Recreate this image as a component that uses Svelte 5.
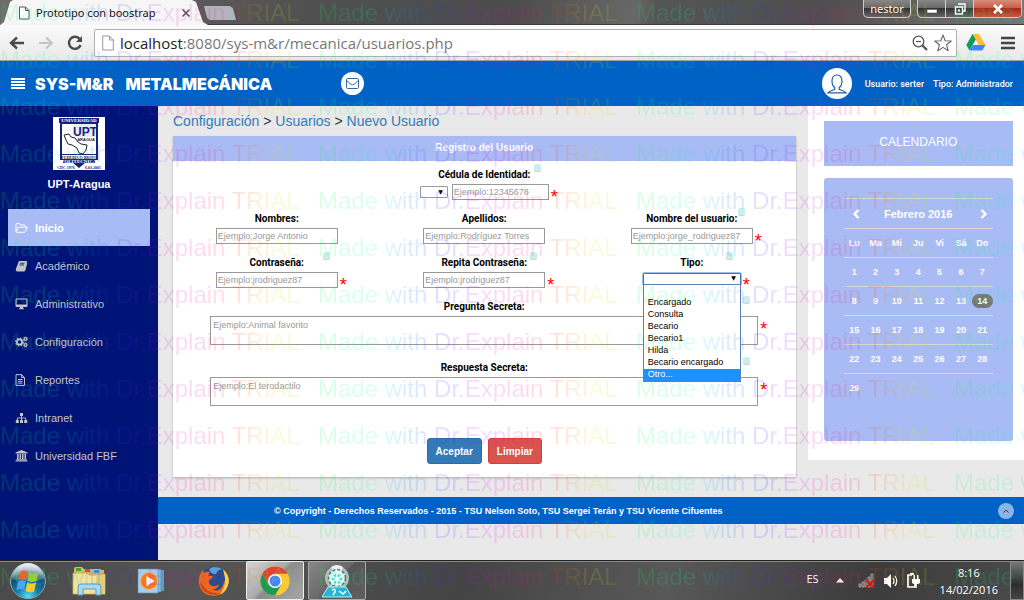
<script>
  const menu = [
    { label: 'Inicio', icon: 'folder' },
    { label: 'Académico', icon: 'book' },
    { label: 'Administrativo', icon: 'desktop' },
    { label: 'Configuración', icon: 'cogs' },
    { label: 'Reportes', icon: 'file' },
    { label: 'Intranet', icon: 'sitemap' },
    { label: 'Universidad FBF', icon: 'bank' }
  ];
  const rows = [
    { id: 'nombres', label: 'Nombres:', hint: 'Ejemplo:Jorge Antonio' },
    { id: 'apellidos', label: 'Apellidos:', hint: 'Ejemplo:Rodríguez Torres' },
    { id: 'usuario', label: 'Nombre del usuario:', hint: 'Ejemplo:jorge_rodriguez87', required: true, tip: true },
    { id: 'clave', label: 'Contraseña:', hint: 'Ejemplo:jrodriguez87', required: true, tip: true },
    { id: 'clave2', label: 'Repita Contraseña:', hint: 'Ejemplo:jrodriguez87', required: true, tip: true }
  ];
  const secrets = [
    { id: 'pregunta', label: 'Pregunta Secreta:', hint: 'Ejemplo:Animal favorito' },
    { id: 'respuesta', label: 'Respuesta Secreta:', hint: 'Ejemplo:El terodactilo' }
  ];
  const tipos = ['', 'Encargado', 'Consulta', 'Becario', 'Becario1', 'Hilda', 'Becario encargado', 'Otro...'];
  const days = ['Lu', 'Ma', 'Mi', 'Ju', 'Vi', 'Sá', 'Do'];
  const weeks = [0, 1, 2, 3, 4].map((w) => days.map((_, d) => w * 7 + d + 1));
  const marks = Array.from({ length: 13 });
</script>

<div class="screen">
  <div class="tabs">
    <div class="tab">
      <svg width="12" height="14" viewBox="0 0 12 14"><path d="M1.5 1H7.5L11 4.5V13H1.5ZM7.5 1V4.5H11" fill="#fff" stroke="#555" /></svg>
      <span>Prototipo con boostrap</span>
      <button aria-label="Cerrar pestaña"><svg width="10" height="10" viewBox="0 0 10 10"><path d="M1.5 1.5 8.5 8.5M8.5 1.5 1.5 8.5" stroke="#555" stroke-width="1.5" /></svg></button>
    </div>
    <button class="newtab" aria-label="Nueva pestaña"></button>
    <button class="person">nestor</button>
    <div class="winbtns">
      <button aria-label="Minimizar"><svg width="12" height="12" viewBox="0 0 12 12"><rect x="1" y="6.5" width="10" height="3.5" fill="#fff" stroke="#555" stroke-width=".6" /></svg></button>
      <button aria-label="Restaurar"><svg width="12" height="12" viewBox="0 0 12 12"><path d="M4 1H11V8H9M1.5 4H8.5V11H1.5Z" fill="none" stroke="#fff" stroke-width="1.5" /><rect x="4" y="6.5" width="2" height="2" fill="#fff" /></svg></button>
      <button class="close" aria-label="Cerrar"><svg width="12" height="10" viewBox="0 0 12 10"><path d="M2 1 10 9M10 1 2 9" stroke="#fff" stroke-width="2.5" /></svg></button>
    </div>
  </div>

  <div class="toolbar">
    <button aria-label="Atrás"><svg width="16" height="14" viewBox="0 0 16 14"><path d="M8 1.5 2 7 8 12.5M2.5 7H15" fill="none" stroke="#4a4a4a" stroke-width="2.4" /></svg></button>
    <button aria-label="Adelante"><svg width="16" height="14" viewBox="0 0 16 14"><path d="M8 1.5 14 7 8 12.5M13.5 7H1" fill="none" stroke="#c4c4c4" stroke-width="2.2" /></svg></button>
    <button aria-label="Recargar"><svg width="16" height="16" viewBox="0 0 16 16"><path d="M12.8 4.2A6 6 0 1 0 13.6 10" fill="none" stroke="#4a4a4a" stroke-width="2.4" /><path d="M15 1V7H9Z" fill="#4a4a4a" /></svg></button>
    <div class="address">
      <svg width="12" height="16" viewBox="0 0 12 16"><path d="M.7 1H7.5L11.3 5V15H.7ZM7.5 1V5H11.3" fill="#fff" stroke="#999" /></svg>
      <span class="url"><b>localhost</b>:8080/sys-m&amp;r/mecanica/usuarios.php</span>
      <svg width="16" height="16" viewBox="0 0 16 16"><circle cx="6.5" cy="6.5" r="5.3" fill="none" stroke="#555" stroke-width="1.3" /><path d="M4 6.5H9" stroke="#555" stroke-width="1.2" /><path d="M10.5 10.5 15 15" stroke="#555" stroke-width="2.4" /></svg>
      <svg width="18" height="18" viewBox="0 0 18 18"><path d="M9 1 11.2 6.7 17.3 7 12.6 10.8 14.2 16.8 9 13.4 3.8 16.8 5.4 10.8.7 7 6.8 6.7Z" fill="#fff" stroke="#666" stroke-width="1.1" stroke-linejoin="round" /></svg>
    </div>
    <svg class="drive" width="20" height="17" viewBox="0 0 20 17"><path d="M6.5 0H13L19.5 11H13Z" fill="#fbc02d" /><path d="M6.5 0 9.8 5.6 3.5 16.5.3 11Z" fill="#0f9d58" /><path d="M6.7 11H19.5L16.3 16.5H3.5Z" fill="#4285f4" /></svg>
    <button aria-label="Menú de Chrome"><svg width="14" height="14" viewBox="0 0 14 14"><path d="M0 2H14M0 7H14M0 12H14" stroke="#444" stroke-width="2.6" /></svg></button>
  </div>

  <header>
    <button aria-label="Menú"><svg width="14" height="12" viewBox="0 0 14 12"><path d="M0 1H14M0 4H14M0 7H14M0 10H14" stroke="#fff" stroke-width="2" /></svg></button>
    <h1><span>SYS-M&amp;R</span><span>METALMECÁNICA</span></h1>
    <a class="mail" href="#mensajes" aria-label="Mensajes"><svg width="13" height="11" viewBox="0 0 13 11"><rect x=".5" y=".5" width="12" height="10" rx="1.2" fill="none" stroke="#2f6aa8" /><path d="M.8 2.5Q4.5 6.8 6.5 6.8T12.2 2.5" fill="none" stroke="#2f6aa8" /></svg></a>
    <div class="who">
      <span class="avatar"><svg width="20" height="20" viewBox="0 0 20 20"><path d="M10 1C6.8 1 5 3.5 5 7C5 10 6.3 12.6 7.8 13.6V15.2C6.5 16.4 2.8 16.2 1 18.8H19C17.2 16.2 13.5 16.4 12.2 15.2V13.6C13.7 12.6 15 10 15 7C15 3.5 13.2 1 10 1Z" fill="none" stroke="#1f5fa5" stroke-width="1.2" /></svg></span>
      <span>Usuario: serter</span><span>Tipo: Administrador</span>
    </div>
  </header>

  <div class="body">
    <nav>
      <svg class="logo" viewBox="0 0 52 53">
        <rect width="52" height="53" fill="#fff" />
        <path d="M6 1H46V6H45V43H42V46H32L26 51 20 46H10V43H7V6H6Z" fill="#15237c" />
        <path d="M9 7H43V37H9Z" fill="#fff" />
        <path d="M9 38H43V42H9Z" fill="#fff" />
        <path d="M22 7H43V20H22Z" fill="#e8ecfa" />
        <text x="26" y="5" font-size="5" text-anchor="middle" fill="#fff" class="serif">UNIVERSIDAD</text>
        <text x="32" y="19" font-size="12" text-anchor="middle" fill="#15237c" class="heavy">UPT</text>
        <text x="33" y="24" font-size="4" text-anchor="middle" fill="#222" class="heavy">ARAGUA</text>
        <path d="M11 18 16 17 18 20 22 21 25 25 28 27 34 28 33 33 30 37 26 36 24 31 19 28 15 27 13 23Z" fill="#fff" stroke="#222" />
        <text x="26" y="42" font-size="4" text-anchor="middle" fill="#222" class="serif">FEDERICO BRITO</text>
        <text x="26" y="46" font-size="5" text-anchor="middle" fill="#fff" class="serif">POLITECNICA</text>
        <text x="13" y="52" font-size="4" text-anchor="middle" fill="#15237c" class="serif">CDC 1976</text>
        <text x="40" y="52" font-size="4" text-anchor="middle" fill="#15237c" class="serif">6.03.2001</text>
      </svg>
      <strong>UPT-Aragua</strong>
      <ul>
        {#each menu as item, i}
          <li>
            <a href="#{item.icon}" class:active={i === 0}>
              <svg width="13" height="12" viewBox="0 0 13 12">
                {#if item.icon === 'folder'}
                  <path d="M1 9.5V2.5Q1 1.5 2 1.5H4.5L5.5 3H9.5Q10.3 3 10.3 4V5M1 9.8 3.3 5.3H12.3L10.3 9.8Q10 10.3 9.5 10.3H1.5Q.9 10.3 1 9.5Z" fill="none" stroke="currentColor" />
                {:else if item.icon === 'book'}
                  <path d="M4 1H12L10 9.5Q9.7 10.3 9 10.3H2.5Q1.8 10.3 2 9.2H9L10.8 2.5 12.3 2.8 10.5 10Q10 11.4 9 11.4H2Q.3 11 .8 9Z" fill="currentColor" /><path d="M5 3.3H9.5M4.5 5H9" stroke="#001377" stroke-width=".8" />
                {:else if item.icon === 'desktop'}
                  <path fill-rule="evenodd" d="M1.5.5H11.5Q12.5.5 12.5 1.5V8Q12.5 9 11.5 9H8L8.3 10.5H9V11.3H4V10.5H4.7L5 9H1.5Q.5 9 .5 8V1.5Q.5.5 1.5.5ZM1.6 1.6V6.6H11.4V1.6Z" fill="currentColor" />
                {:else if item.icon === 'cogs'}
                  <circle cx="4.5" cy="6" r="2.6" fill="none" stroke="currentColor" stroke-width="1.8" /><circle cx="4.5" cy="6" r="3.9" fill="none" stroke="currentColor" stroke-width="1.2" stroke-dasharray="1.5 1.56" />
                  <circle cx="10.5" cy="3" r="1.4" fill="none" stroke="currentColor" stroke-width="1.2" /><circle cx="10.5" cy="3" r="2.2" fill="none" stroke="currentColor" stroke-width=".6" stroke-dasharray="1 .8" />
                  <circle cx="10.5" cy="9" r="1.4" fill="none" stroke="currentColor" stroke-width="1.2" /><circle cx="10.5" cy="9" r="2.2" fill="none" stroke="currentColor" stroke-width=".6" stroke-dasharray="1 .8" />
                {:else if item.icon === 'file'}
                  <path d="M1 .6H6.5L9.5 3.6V11.4H1ZM6.5.6V3.6H9.5M3 5.5H7.5M3 7.3H7.5M3 9.1H7.5" fill="none" stroke="currentColor" />
                {:else if item.icon === 'sitemap'}
                  <path d="M5 1H8V4H5ZM.8 8H3.8V11H.8ZM5 8H8V11H5ZM9.2 8H12.2V11H9.2Z" fill="currentColor" /><path d="M6.5 4V8M2.3 8V6H10.7V8" fill="none" stroke="currentColor" stroke-width=".9" />
                {:else}
                  <path d="M6.5 0 12.5 2.6V3.5H.5V2.6ZM2 4H3.6V9H2ZM4.6 4H6.1V9H4.6ZM7 4H8.5V9H7ZM9.5 4H11V9H9.5ZM1.2 9.2H11.8V10.2H1.2ZM.5 10.6H12.5V11.6H.5Z" fill="currentColor" />
                {/if}
              </svg>
              {item.label}
            </a>
          </li>
        {/each}
      </ul>
    </nav>

    <div class="content">
      <div class="columns">
        <main>
          <div class="crumbs"><a href="#configuracion">Configuración</a> &gt; <a href="#usuarios">Usuarios</a> &gt; <a href="#nuevo">Nuevo Usuario</a></div>
          <form>
            <h2>Registro del Usuario</h2>
            <div class="field">
              <label for="cedula">Cédula de Identidad:</label>
              <div class="line">
                <div class="control pair">
                  <span class="pick small"><select aria-label="Nacionalidad"><option></option></select></span>
                  <input id="cedula" placeholder="Ejemplo:12345678" />
                  <i class="tip"></i>
                </div>
                <span class="star">*</span>
              </div>
            </div>
            <div class="trio">
              {#each rows as f}
                <div class="field">
                  <label for={f.id}>{f.label}</label>
                  <div class="line">
                    <div class="control">
                      <input id={f.id} placeholder={f.hint} />
                      {#if f.tip}<i class="tip"></i>{/if}
                    </div>
                    {#if f.required}<span class="star">*</span>{/if}
                  </div>
                </div>
              {/each}
              <div class="field">
                <label for="tipo">Tipo:</label>
                <div class="line">
                  <div class="control">
                    <span class="pick open"><select id="tipo">{#each tipos as t}<option>{t}</option>{/each}</select></span>
                    <i class="tip"></i>
                    <div class="list">
                      {#each tipos as t, i}<div class:on={i === 7}>{t}</div>{/each}
                    </div>
                  </div>
                  <span class="star">*</span>
                </div>
              </div>
            </div>
            {#each secrets as s}
              <div class="field wide">
                <label for={s.id}>{s.label}</label>
                <div class="line">
                  <div class="control">
                    <textarea id={s.id} placeholder={s.hint}></textarea>
                    <i class="tip"></i>
                  </div>
                  <span class="star">*</span>
                </div>
              </div>
            {/each}
            <div class="actions">
              <button type="button" class="ok">Aceptar</button>
              <button type="reset" class="clear">Limpiar</button>
            </div>
          </form>
        </main>

        <aside>
          <h3>CALENDARIO</h3>
          <div class="calendar">
            <table>
              <thead>
                <tr>
                  <th><button aria-label="Mes anterior"><svg width="8" height="10" viewBox="0 0 8 10"><path d="M6.5 1 2.5 5 6.5 9" fill="none" stroke="#fff" stroke-width="2.4" /></svg></button></th>
                  <th colspan="5" class="month">Febrero 2016</th>
                  <th><button aria-label="Mes siguiente"><svg width="8" height="10" viewBox="0 0 8 10"><path d="M1.5 1 5.5 5 1.5 9" fill="none" stroke="#fff" stroke-width="2.4" /></svg></button></th>
                </tr>
                <tr>{#each days as d}<th>{d}</th>{/each}</tr>
              </thead>
              <tbody>
                {#each weeks as w}
                  <tr>{#each w as d}<td>{#if d <= 29}<span class:today={d === 14}>{d}</span>{/if}</td>{/each}</tr>
                {/each}
              </tbody>
            </table>
          </div>
        </aside>
      </div>
      <footer>
        <p>© Copyright - Derechos Reservados - 2015 - TSU Nelson Soto, TSU Sergei Terán y TSU Vicente Cifuentes</p>
        <a href="#arriba" aria-label="Subir"><svg width="6" height="4" viewBox="0 0 6 4"><path d="M.5 3.5 3 1 5.5 3.5" fill="none" stroke="#246" /></svg></a>
      </footer>
    </div>
  </div>

  <div class="taskbar">
    <button class="start" aria-label="Inicio">
      <svg width="38" height="38" viewBox="0 0 38 38">
        <defs>
          <radialGradient id="orb" cx=".5" cy=".95" r=".9"><stop offset="0" stop-color="#4fe0f5" /><stop offset=".35" stop-color="#1580b0" /><stop offset=".75" stop-color="#164668" /><stop offset="1" stop-color="#a9c2cf" /></radialGradient>
          <linearGradient id="shine" x2="0" y2="1"><stop offset="0" stop-color="#fff" stop-opacity=".75" /><stop offset="1" stop-color="#fff" stop-opacity=".15" /></linearGradient>
        </defs>
        <circle cx="19" cy="19" r="17.5" fill="url(#orb)" stroke="#8ba6b2" />
        <path d="M3 17A16 16 0 0 1 35 17Q19 22 3 17Z" fill="url(#shine)" />
        <path d="M11.5 9.5Q15 7.5 18.700 9.500L17 18Q14 16 9.500 18Z" fill="#f0612a" />
        <path d="M20 10Q24 12.5 29.500 10.500L27.500 19Q22.500 21 18.500 18.700Z" fill="#9dc93c" />
        <path d="M9.200 19.500Q13 17.500 16.700 19.500L15.200 28Q12 26 7.500 28Z" fill="#4aa8e8" />
        <path d="M18.200 20.200Q22 22.500 27 20.500L25.200 29.500Q21 31.500 16.500 29Z" fill="#fdc92e" />
      </svg>
    </button>
    <button aria-label="Explorador">
      <svg width="34" height="32" viewBox="0 0 34 32">
        <path d="M2 4Q2 2 4 2H10L12 4H18L20 4H28L30 5H32V28H2Z" fill="#d6b963" /><path d="M4 3H9V6H4Z" fill="#39a935" /><path d="M13 4H18V7H13Z" fill="#d9482b" /><path d="M22 5H27V8H22Z" fill="#3a8fd9" />
        <path d="M1 8H15L17 10H25L33 9V29H1Z" fill="#f5e29b" stroke="#cfae54" stroke-width=".8" /><path d="M24 10H33V29H24Z" fill="#e8cd78" />
        <path d="M6 30V22Q6 19 9 19H26Q29 19 29 22V30H24V24H11V30Z" fill="#a9d8ef" stroke="#5c9cc0" />
      </svg>
    </button>
    <button aria-label="Reproductor">
      <svg width="30" height="28" viewBox="0 0 30 28">
        <path d="M8 3H28V24H8Z" fill="#5c9fc9" /><path d="M5 2.5H25V25H5Z" fill="#82bde0" stroke="#4d87ae" stroke-width=".6" /><path d="M2 2H22V26H2Z" fill="#a5cfe6" stroke="#5a8eb0" stroke-width=".6" />
        <circle cx="13" cy="14" r="8.500" fill="#f47b20" stroke="#f9b27a" /><path d="M10.5 9 18.5 14 10.5 19Z" fill="#fff" />
      </svg>
    </button>
    <button aria-label="Firefox">
      <svg width="32" height="32" viewBox="0 0 32 32">
        <circle cx="17" cy="14.5" r="13" fill="#224f93" /><path d="M12 4Q18 0 25 4Q20 5 19 9Q14 10 12 4Z" fill="#5d9fd6" />
        <path d="M29 7Q33 13 31 20Q28 31 16 31Q4 30 2 19Q1 10 6 5L7 8Q10 6 13 7Q11 9 12 11H16Q15 14 12 15Q11 19 15 21Q19 22 22 19Q21 25 15 24Q21 28 25 22Q29 15 29 7Z" fill="#ec6a1e" />
        <path d="M26 4Q34 12 31 20Q29 27 23 29.5Q29 21 28 13Q27 8 26 4Z" fill="#fbd04a" /><path d="M3 17Q3 24 10 28Q17 32 24 28Q12 29 7 22Z" fill="#cf451a" />
      </svg>
    </button>
    <button class="win bright" aria-label="Chrome">
      <svg width="32" height="32" viewBox="0 0 32 32">
        <circle cx="16" cy="16" r="14.5" fill="#fcc934" />
        <path d="M3.4 8.7A14.5 14.5 0 0 1 28.6 8.7H16L9.7 19.6Z" fill="#db4437" /><path d="M3.4 8.7A14.5 14.5 0 0 0 16 30.5L22.3 19.6H9.7Z" fill="#1a9c55" />
        <circle cx="16" cy="16" r="7" fill="#fff" /><circle cx="16" cy="16" r="5.5" fill="#4285f4" />
      </svg>
    </button>
    <button class="win" aria-label="Dr.Explain">
      <svg width="32" height="34" viewBox="0 0 32 34">
        <circle cx="16" cy="14" r="12" fill="#b4bebe" /><path d="M10 3Q16-1 22 3L20 8H12Z" fill="#eef3f2" />
        <circle cx="16" cy="14" r="8.5" fill="#e6f4f4" stroke="#4c7575" stroke-width="1.5" stroke-dasharray="3 2" /><circle cx="16" cy="15" r="5" fill="#47dbe0" />
        <path d="M16 9V21M11 12 21 18M21 12 11 18" stroke="#f2ffff" stroke-width="1.500" />
        <path d="M7 23H25L31 33H1Z" fill="#27b4d8" stroke="#b6f0f6" /><path d="M11 26Q15 24 14 28L12 31M18 27 22 30 25 27" stroke="#fff" stroke-width="1.5" fill="none" />
      </svg>
    </button>
    <div class="tray">
      <span class="lang">ES</span>
      <svg width="8" height="5" viewBox="0 0 8 5"><path d="M4 0 8 4.5H0Z" fill="#fff" /></svg>
      <svg width="18" height="16" viewBox="0 0 18 16"><path d="M1 11H3V14H1ZM4 9H6V14H4ZM7 7H9V14H7ZM10 4H12V14H10ZM13 1H15V14H13Z" fill="#555" stroke="#bbb" stroke-width=".7" /><path d="M8 7 16 15M16 7 8 15" stroke="#e01010" stroke-width="2" /></svg>
      <svg width="16" height="16" viewBox="0 0 16 16"><path d="M1 5H4L8 1V15L4 11H1Z" fill="#fff" /><path d="M10 5Q12 8 10 11M12 3Q15.5 8 12 13" fill="none" stroke="#fff" stroke-width="1.2" /></svg>
      <svg width="16" height="17" viewBox="0 0 16 17"><path d="M6 3H2V15H9V12" fill="none" stroke="#fff" stroke-width="1.7" /><path d="M4 1H8V3H4ZM6 7H14V10Q14 12 10.8 12V16H9.3V12Q6 12 6 10ZM7.5 3H9V7H7.5ZM11 3H12.5V7H11Z" fill="#fff" /></svg>
      <div class="clock"><span>8:16</span><span>14/02/2016</span></div>
      <button class="peek" aria-label="Mostrar escritorio"></button>
    </div>
  </div>

  <div class="watermark" aria-hidden="true">
    {#each marks as _}
      <div>{#each [0, 1, 2, 3] as _}<span>Made with Dr.Explain TRIAL</span>{/each}</div>
    {/each}
  </div>
</div>

<style>
  :global(body) { margin: 0; }
  * { box-sizing: border-box; }
  .screen {
    position: relative;
    min-height: 100vh;
    display: flex;
    flex-direction: column;
    overflow: hidden;
    font-family: "Liberation Sans", Arial, sans-serif;
    font-size: 11px;
    background: #e9e9e9;
  }
  svg { display: block; flex: none; }
  button { font: inherit; border: 0; padding: 0; background: none; display: flex; align-items: center; justify-content: center; }
  a { text-decoration: none; }
  h1, h2, h3, p, ul { margin: 0; padding: 0; }

  .tabs { height: 25px; display: flex; background: linear-gradient(100deg, #6d6d6d, #505050 30%, #4c4c4c 50%, #686868 62%, #555 64%, #4e4e4e 80%, #777); border-bottom: 1px solid #3c3c3c; }
  .tab { width: 208px; height: 25px; display: flex; align-items: center; gap: 6px; padding: 0 17px 0 18px; background: #f6f6f6; clip-path: polygon(0 100%, 4px 88%, 10px 8%, 13px 0, 192px 0, 196px 8%, 203px 88%, 208px 100%); font: 11px "Noto Sans", sans-serif; color: #111; }
  .tab button { margin-left: auto; }
  .newtab { width: 32px; height: 14px; margin-top: 6px; margin-left: -4px; background: #b0b5bd; clip-path: polygon(0 0, 80% 0, 90% 15%, 100% 100%, 18% 100%, 10% 85%); }
  .person, .winbtns { height: 18px; border: 1px solid #ccc; border-top: 0; border-radius: 0 0 5px 5px; background: linear-gradient(#888, #666 50%, #333 50%, #666); color: #fff; }
  .person { margin-left: auto; width: 48px; font: 11px "Noto Sans", sans-serif; }
  .winbtns { display: flex; margin: 0 2px 0 6px; overflow: hidden; }
  .winbtns button { width: 28px; border-right: 1px solid #ccc; }
  .winbtns .close { width: 47px; border: 0; background: linear-gradient(#d98d7c, #c85a45 50%, #a82a18 50%, #d0533c); }

  .toolbar { height: 36px; display: flex; align-items: center; gap: 13px; padding: 0 9px 0 9px; background: linear-gradient(#fafafa, #e9e9e9); border-bottom: 1px solid #a0a0a0; }
  .address { flex: 1; height: 28px; margin-left: -2px; display: flex; align-items: center; gap: 6px; padding: 0 4px 0 7px; background: #fff; border: 1px solid #b0b0b0; border-radius: 2px; }
  .url { flex: 1; font: 15px "Open Sans", sans-serif; color: #777; }
  .url b { font-weight: 400; color: #222; }
  .drive { margin-left: -4px; margin-right: 2px; }

  header { height: 45px; display: flex; align-items: center; padding: 0 11px; background: #0062c4; color: #fff; }
  h1 { display: flex; gap: 12px; margin-left: 10px; font: 900 16px Inter, sans-serif; }
  .mail { width: 23px; height: 23px; margin-left: 69px; display: flex; align-items: center; justify-content: center; border-radius: 50%; background: #fff; }
  .who { margin-left: auto; display: flex; align-items: center; gap: 9px; font: 500 9px Roboto, sans-serif; }
  .avatar { width: 30px; height: 31px; margin-right: 4px; display: flex; align-items: center; justify-content: center; border-radius: 50%; background: #fff; }

  .body { flex: 1; display: grid; grid-template-columns: 158px 1fr; }
  nav { background: #001377; color: #fff; padding: 11px 8px 0; }
  .logo { width: 52px; height: 53px; margin: 0 auto; }
  .serif { font-family: "Liberation Serif", serif; font-weight: 700; }
  .heavy { font-family: "Liberation Sans", sans-serif; font-weight: 700; }
  nav strong { display: block; margin: 8px 0 18px; line-height: 13px; text-align: center; }
  nav ul { list-style: none; display: grid; gap: 1px; }
  nav a { height: 37px; width: 142px; padding: 0 7px; display: flex; align-items: center; gap: 7px; color: #c4c4c4; }
  nav a.active { background: #a9bbf5; color: #fff; font-weight: 700; }

  .content { display: flex; flex-direction: column; min-width: 0; }
  .columns { display: grid; grid-template-columns: 3fr 1fr; align-items: start; }
  main { padding: 5px 12px 20px 15px; }
  .crumbs { font-size: 14px; line-height: 20px; margin-bottom: 5px; color: #333; }
  .crumbs a { color: #337ab7; }
  form { background: #fff; box-shadow: 0 1px 2px #0004; padding-bottom: 13px; }
  h2 { height: 25px; line-height: 23px; text-align: center; background: #a9bbf5; color: #fff; font-size: 10px; margin-bottom: 3px; }
  .field { margin-bottom: 8px; }
  label { display: block; height: 20px; text-align: center; font: 700 10px/21px Roboto, sans-serif; color: #000; }
  .line { display: grid; grid-template-columns: 1fr auto 1fr; }
  .control { grid-column: 2; position: relative; height: 16px; }
  .star { grid-column: 3; padding: 4px 0 0 2px; height: 16px; font-size: 18px; line-height: 18px; color: #f00; }
  .tip { position: absolute; right: 8px; top: -20px; width: 7px; height: 7px; border-radius: 2px; background: #c9f0ee; box-shadow: 0 1px 1px #0003; }
  input, textarea { display: block; width: 122px; height: 16px; margin: 0; padding: 0 1px; border: 1px solid #999; border-radius: 0; background: #fff; font: 9px "Liberation Sans", Arial, sans-serif; outline: 0; resize: none; }
  ::placeholder { color: #999; opacity: 1; }
  .pair { display: flex; align-items: center; gap: 4px; }
  .pair input { width: 97px; }
  .pick { position: relative; display: block; width: 98px; }
  .pick::after { content: "▼"; position: absolute; right: 5px; top: 0; font: 6px/12px "DejaVu Sans", sans-serif; color: #000; pointer-events: none; }
  .pick select { display: block; appearance: none; width: 100%; height: 12px; margin: 0; padding: 0; border: 1px solid #999; border-radius: 1px; background: #fff; font-size: 9px; }
  .small { width: 28px; }
  .open { padding-top: 1px; }
  .open select { border-color: #3b73c8; outline: 1px solid #9dbdec; }
  .list { position: absolute; z-index: 2; left: 0; top: 12px; width: 98px; border: 1px solid #5580bd; background: #fff; font: 9px/12px "Liberation Sans", Arial, sans-serif; color: #000; }
  .list div { height: 12px; padding-left: 4px; line-height: 11px; }
  .list .on { background: #1e90ff; color: #fff; }
  .trio { display: grid; grid-template-columns: repeat(3, 1fr); }
  .wide { margin-bottom: 12px; }
  .wide .line { grid-template-columns: 1fr 88% 1fr; }
  .wide .control, .wide textarea { height: 29px; width: 100%; }
  .wide textarea { padding: 3px 2px; }
  .actions { display: flex; justify-content: center; gap: 6px; padding-top: 20px; }
  .actions button { height: 26px; padding: 0 8px; border: 1px solid #2e6da4; border-radius: 3px; background: #337ab7; color: #fff; font-weight: 700; font-size: 10px; }
  .actions .clear { background: #d9534f; border-color: #d43f3a; }

  aside { background: #fff; padding: 15px 11px 19px 16px; color: #fff; }
  h3 { height: 45px; line-height: 43px; margin-bottom: 12px; text-align: center; background: #a9bbf5; font-size: 12px; font-weight: 400; }
  .calendar { padding: 20px 20px 38px; background: #a9bbf5; border-radius: 3px; }
  table { width: 100%; table-layout: fixed; border-collapse: collapse; font-size: 9px; }
  th, td { height: 29px; padding: 0; border-top: 1px solid #d8d8d8; text-align: center; }
  td { font-weight: 700; }
  th.month { font-size: 11px; }
  thead tr:first-child th { height: 30px; }
  th button { margin: 0 auto; padding-left: 3px; }
  .today { display: block; height: 14px; line-height: 14px; border-radius: 7px; background: #777; }

  footer { height: 27px; display: flex; align-items: center; justify-content: space-between; padding: 0 10px 0 116px; background: #0062c4; color: #fff; }
  footer p { font-weight: 700; font-size: 9px; }
  footer a { width: 16px; height: 16px; border-radius: 50%; background: #8ab4e4; display: flex; align-items: center; justify-content: center; }

  .taskbar { height: 40px; display: flex; align-items: stretch; gap: 4px; background: linear-gradient(100deg, #4a4a4a, #555 20%, #444 45%, #585858 65%, #3c3c3c 85%, #4a4a4a); border-top: 1px solid #222; box-shadow: inset 0 1px #888; }
  .taskbar > button { width: 58px; }
  .taskbar .start { width: 56px; }
  .taskbar .win { border: 1px solid #aaa; border-radius: 2px; background: linear-gradient(135deg, #888, #666 50%, #555 50%, #606060); }
  .taskbar .bright { border-color: #eee; background: linear-gradient(135deg, #d4d4d4, #aaa 45%, #8c8c8c 50%, #a8a8a8); }
  .tray { margin-left: auto; display: flex; align-items: center; gap: 7px; color: #fff; font: 11px/17px "Open Sans", sans-serif; }
  .lang { margin-right: 10px; margin-top: -4px; }
  .tray svg:nth-of-type(1) { margin-right: 7px; }
  .clock { margin: 0 5px 0 11px; display: grid; text-align: center; }
  .peek { align-self: stretch; width: 14px; border: 1px solid #888; background: linear-gradient(#777, #2e2e2e 60%, #444); }

  .watermark { position: absolute; inset: 0; z-index: 5; overflow: hidden; pointer-events: none; opacity: .14; font-size: 24px; line-height: 47px; margin-top: -11px; white-space: nowrap; }
  .watermark div { width: 1272px; height: 47px; display: grid; grid-template-columns: repeat(4, 318px); background: repeating-linear-gradient(90deg, #00ff40 0, #00ffd0 60px, #0080ff 90px, #4020ff 130px, #e000ff 165px, #ff0080 205px, #ff4000 240px, #ffe000 275px, #00ff40 318px); -webkit-background-clip: text; background-clip: text; color: transparent; }
</style>
